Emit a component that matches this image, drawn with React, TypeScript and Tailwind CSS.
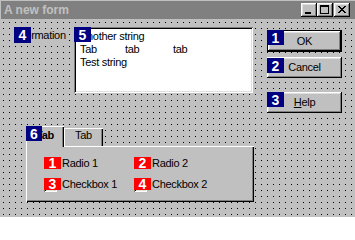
import type { ReactNode } from "react";

// classic 3D borders
const raised =
  "shadow-[inset_-1px_-1px_#000,inset_1px_1px_#fff,inset_-2px_-2px_#808080,inset_2px_2px_#dfdfdf]";
const sunken =
  "shadow-[inset_1px_1px_#808080,inset_-1px_-1px_#fff,inset_2px_2px_#000,inset_-2px_-2px_#dfdfdf]";

function Badge({
  n,
  red = false,
  className,
}: {
  n: number;
  red?: boolean;
  className: string;
}) {
  return (
    <span
      className={`absolute z-20 flex items-center justify-center text-[14px] font-bold leading-none tracking-normal text-white ${
        red ? "bg-[#ff0000]" : "bg-[#000080]"
      } ${className}`}
    >
      {n}
    </span>
  );
}

function CaptionButton({ children, className = "" }: { children: ReactNode; className?: string }) {
  return (
    <div className={`h-[14px] w-[16px] bg-[#c0c0c0] ${raised} ${className}`}>
      <svg width="16" height="14" viewBox="0 0 16 14" shapeRendering="crispEdges">
        {children}
      </svg>
    </div>
  );
}

function TitleBar() {
  const x = [
    [0, 0], [1, 0], [6, 0], [7, 0],
    [1, 1], [2, 1], [5, 1], [6, 1],
    [2, 2], [3, 2], [4, 2], [5, 2],
    [3, 3], [4, 3],
    [2, 4], [3, 4], [4, 4], [5, 4],
    [1, 5], [2, 5], [5, 5], [6, 5],
    [0, 6], [1, 6], [6, 6], [7, 6],
  ];
  return (
    <div className="ml-px mt-px flex h-[18px] items-center bg-[#808080] pl-[3px] pr-[5px]">
      <span className="flex-1 text-[12px] font-bold tracking-normal text-[#c0c0c0]">A new form</span>
      <CaptionButton>
        <rect x="4" y="9" width="6" height="2" fill="#000" />
      </CaptionButton>
      <CaptionButton>
        <rect x="3" y="2" width="9" height="2" fill="#000" />
        <rect x="3" y="2" width="1" height="9" fill="#000" />
        <rect x="11" y="2" width="1" height="9" fill="#000" />
        <rect x="3" y="10" width="9" height="1" fill="#000" />
      </CaptionButton>
      <CaptionButton className="ml-px">
        {x.map(([cx, cy], i) => (
          <rect key={i} x={4 + cx} y={3 + cy} width="1" height="1" fill="#000" />
        ))}
      </CaptionButton>
    </div>
  );
}

function PushButton({
  label,
  top,
  isDefault = false,
}: {
  label: ReactNode;
  top: string;
  isDefault?: boolean;
}) {
  return (
    <div
      className={`absolute left-[267px] w-[75px] ${top} ${
        isDefault ? "h-[22px] border border-black" : "h-[21px]"
      }`}
    >
      <div className={`flex h-full w-full items-center justify-center bg-[#c0c0c0] ${raised}`}>
        {label}
      </div>
    </div>
  );
}

function Choice({ n, label, box }: { n: number; label: string; box?: boolean }) {
  return (
    <div className="relative flex h-[12px] items-center">
      {box ? (
        <span className={`mt-px h-[13px] w-[13px] shrink-0 self-start bg-white ${sunken}`} />
      ) : (
        <span className="h-[12px] w-[12px] shrink-0 rounded-full bg-white" />
      )}
      <span className={box ? "ml-[5px]" : "ml-[6px]"}>{label}</span>
      <Badge n={n} red className="left-0 top-0 h-[12px] w-[17px]" />
    </div>
  );
}

export default function App() {
  return (
    <div className="h-[217px] w-[355px] overflow-hidden bg-[#c0c0c0] font-['Liberation_Sans',Arial,sans-serif] text-[11px] leading-[13px] tracking-[-0.3px] text-black">
      <TitleBar />

      {/* design canvas */}
      <div className="relative h-[198px] bg-[conic-gradient(from_270deg_at_1px_1px,#000_90deg,transparent_90deg)] bg-size-[6px_6px] bg-position-[3px_3px]">
        <span className="absolute left-[14px] top-[10px] h-[13px] bg-[#c0c0c0]">Information</span>
        <Badge n={4} className="left-[14px] top-[8px] h-[16px] w-[17px]" />

        <div className={`absolute left-[74px] top-[8px] h-[66px] w-[179px] bg-white pl-[6px] pt-[3px] ${sunken}`}>
          <div>Another string</div>
          <div className="flex">
            <span className="w-[45px]">Tab</span>
            <span className="w-[48px]">tab</span>
            <span>tab</span>
          </div>
          <div>Test string</div>
        </div>
        <Badge n={5} className="left-[74px] top-[8px] h-[15px] w-[17px]" />

        <PushButton label="OK" top="top-[11px]" isDefault />
        <Badge n={1} className="left-[267px] top-[11px] h-[15px] w-[17px]" />
        <PushButton label="Cancel" top="top-[38px]" />
        <Badge n={2} className="left-[267px] top-[39px] h-[15px] w-[17px]" />
        <PushButton
          label={
            <span>
              <span className="underline">H</span>elp
            </span>
          }
          top="top-[73px]"
        />
        <Badge n={3} className="left-[267px] top-[73px] h-[15px] w-[17px]" />

        {/* tab control */}
        <div className="absolute left-[26px] top-[107px] w-[228px]">
          <div className="flex h-[20px] items-start">
            <div className="relative z-10 h-[21px] w-[38px] bg-[#c0c0c0] pt-[3px] text-center font-bold shadow-[inset_1px_1px_#fff,inset_-1px_0_#000,inset_-2px_0_#808080]">
              Tab
            </div>
            <div className="mt-[2px] h-[18px] w-[39px] bg-[#c0c0c0] pt-px text-center shadow-[inset_1px_1px_#fff,inset_-1px_0_#000,inset_-2px_0_#808080]">
              Tab
            </div>
          </div>
          <div className="h-[56px] bg-[#c0c0c0] pl-[18px] pt-[11px] shadow-[inset_1px_1px_#fff,inset_-1px_-1px_#000,inset_-2px_-2px_#808080]">
            <div className="grid grid-cols-[90px_90px] gap-y-[9px]">
              <Choice n={1} label="Radio 1" />
              <Choice n={2} label="Radio 2" />
              <Choice n={3} label="Checkbox 1" box />
              <Choice n={4} label="Checkbox 2" box />
            </div>
          </div>
          <Badge n={6} className="left-0 top-0 h-[15px] w-[16px]" />
        </div>
      </div>
    </div>
  );
}
